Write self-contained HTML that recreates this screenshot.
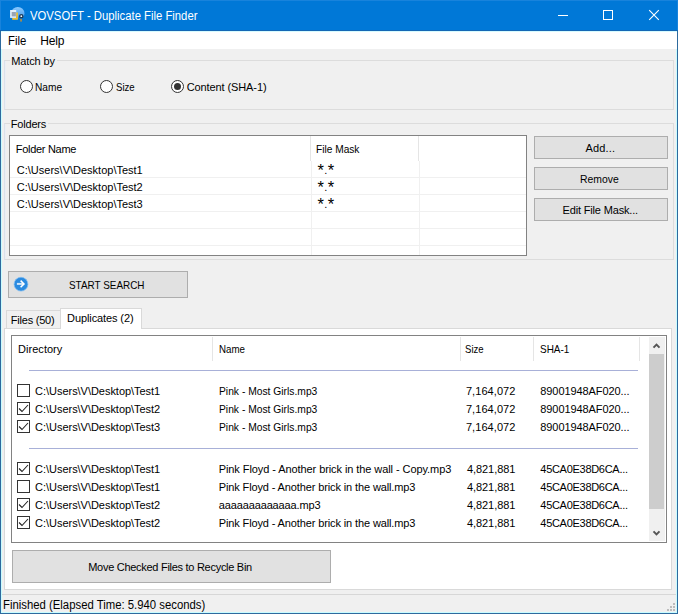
<!DOCTYPE html>
<html><head><meta charset="utf-8"><title>VOVSOFT - Duplicate File Finder</title>
<style>
*{box-sizing:border-box;margin:0;padding:0}
html,body{width:678px;height:614px;overflow:hidden;background:#f0f0f0}
body{position:relative;font-family:"Liberation Sans","DejaVu Sans",sans-serif;font-size:11px;color:#000;line-height:13px}
.a{position:absolute;white-space:nowrap}
.gb{border:1px solid #dcdcdc;border-left-color:#dce1ea;box-shadow:inset 1px 0 0 #eaeff5}
.gl{background:#f0f0f0}
.radio{width:13px;height:13px;border-radius:50%;border:1px solid #333;background:#fff}
.dot{width:7px;height:7px;border-radius:50%;background:#333;left:2px;top:2px}
.btn{border:1px solid #adadad;background:#e1e1e1}
.lv{background:#fff;border:1px solid #828282}
.hl{background:#f0f0f0;height:1px}
.vl{background:#f0f0f0;width:1px}
.hs{background:#e5e5e5;width:1px}
.cb{width:13px;height:13px;border:1px solid #333;background:#fff}
.sep{height:1px;background:#a8b0d8;left:29px;width:609px}
.ast{font-size:16.5px;line-height:0;position:relative;top:2px}
.g{width:2px;height:2px;background:#bcbcbc}
</style></head><body>
<!-- window frame -->
<div class="a" style="left:0;top:0;width:678px;height:614px;background:#2e6a9e"></div>
<div class="a" style="left:1px;top:0;width:676px;height:613px;background:#c8fcff"></div>
<div class="a" style="left:2px;top:0;width:674px;height:612px;background:#f0f0f0"></div>
<div class="a" style="left:0;top:0;width:678px;height:31px;background:#0078d7"></div>
<div class="a" style="left:0;top:0;width:678px;height:1px;background:#1883dc"></div>
<div class="a" style="left:0;top:0;width:1px;height:30px;background:#1883dc"></div>
<div class="a" style="left:677px;top:0;width:1px;height:30px;background:#1883dc"></div>
<!-- app icon -->
<svg class="a" style="left:8px;top:5px" width="18" height="18" viewBox="8 5 18 18">
<defs><linearGradient id="ig" x1="0" y1="0" x2="0" y2="1"><stop offset="0" stop-color="#8ccaff"/><stop offset="0.6" stop-color="#5aa8f0"/><stop offset="1" stop-color="#0078d7" stop-opacity="0"/></linearGradient></defs>
<circle cx="17.8" cy="13.6" r="6.7" fill="url(#ig)"/>
<rect x="10.1" y="10" width="6.1" height="7.9" fill="#e6f0fa"/>
<rect x="11.7" y="12" width="4.2" height="4.4" fill="#98a4b4"/>
<path d="M16.2 12.6H17.9V19.8H12.2V17.9H16.2Z" fill="#f0c030"/>
<circle cx="21.3" cy="16.2" r="1.6" fill="#f4f8fc" stroke="#1c3c5c" stroke-width="1.4"/>
<rect x="20.3" y="18.8" width="1.5" height="2.8" fill="#c89030"/>
</svg>
<!-- window controls -->
<svg class="a" style="left:540px;top:0" width="138" height="31" viewBox="0 0 138 31" fill="none" stroke="#fff" stroke-width="1">
<path d="M18 15.5H28"/>
<rect x="63.5" y="10.5" width="9" height="9"/>
<path d="M109.2 10.2L118.8 19.8M118.8 10.2L109.2 19.8" stroke-width="1.1"/>
</svg>
<div class="a" style="left:0;top:30px;width:678px;height:1px;background:#1467b4"></div>
<div class="a" style="left:1px;top:31px;width:676px;height:18px;background:#fff"></div>
<div class="a" style="left:1px;top:31px;width:676px;height:1px;background:#d6fbff"></div>

<!-- Match by -->
<div class="a gb" style="left:4px;top:60px;width:670px;height:50px"></div>
<div class="a gl" style="left:10px;top:55px;width:47px;height:13px"></div>
<div class="a radio" style="left:20px;top:80px"></div>
<div class="a radio" style="left:100px;top:80px"></div>
<div class="a radio" style="left:171px;top:80px"><div class="a dot"></div></div>

<!-- Folders -->
<div class="a gb" style="left:4px;top:123px;width:670px;height:137px"></div>
<div class="a gl" style="left:10px;top:118px;width:38px;height:13px"></div>
<div class="a lv" style="left:9px;top:135px;width:518px;height:121px"></div>
<div class="a hs" style="left:310px;top:136px;height:25px"></div>
<div class="a hs" style="left:418px;top:136px;height:25px"></div>
<div class="a vl" style="left:311px;top:161px;height:94px"></div>
<div class="a vl" style="left:419px;top:161px;height:94px"></div>
<div class="a hl" style="left:10px;top:177px;width:516px"></div>
<div class="a hl" style="left:10px;top:194px;width:516px"></div>
<div class="a hl" style="left:10px;top:211px;width:516px"></div>
<div class="a hl" style="left:10px;top:228px;width:516px"></div>
<div class="a hl" style="left:10px;top:245px;width:516px"></div>
<div class="a btn" style="left:534px;top:136px;width:134px;height:23px"></div>
<div class="a btn" style="left:534px;top:167px;width:134px;height:23px"></div>
<div class="a btn" style="left:534px;top:198px;width:134px;height:23px"></div>

<!-- start search -->
<div class="a btn" style="left:8px;top:271px;width:180px;height:27px"></div>
<svg class="a" style="left:13px;top:276px" width="17" height="17" viewBox="0 0 17 17">
<circle cx="8" cy="8.2" r="6.9" fill="#2b8be0" stroke="#7cbcf2" stroke-width="0.7"/>
<path d="M3.9 7.9H10.2" stroke="#cfe6fb" stroke-width="2" fill="none"/>
<path d="M7.6 4.6L11 7.9L7.6 11.3" stroke="#fff" stroke-width="1.5" fill="none"/>
</svg>

<!-- tabs -->
<div class="a" style="left:4px;top:328px;width:668px;height:262px;background:#fff;border:1px solid #d9d9d9"></div>
<div class="a" style="left:6px;top:310px;width:55px;height:18px;border:1px solid #d9d9d9;border-bottom:0;background:#f0f0f0"></div>
<div class="a" style="left:60px;top:308px;width:82px;height:21px;border:1px solid #d9d9d9;border-bottom:0;background:#fff"></div>

<!-- list 2 -->
<div class="a lv" style="left:11px;top:335px;width:656px;height:208px"></div>
<div class="a hs" style="left:212px;top:337px;height:24px"></div>
<div class="a hs" style="left:460px;top:337px;height:24px"></div>
<div class="a hs" style="left:533px;top:337px;height:24px"></div>
<div class="a hs" style="left:639px;top:337px;height:24px"></div>
<div class="a sep" style="top:370px"></div>
<div class="a sep" style="top:448px"></div>
<div class="a cb" style="left:17px;top:384px"></div>
<div class="a cb" style="left:17px;top:402px"><svg class="a" style="left:-1px;top:-1px" width="13" height="13" viewBox="0 0 13 13"><path d="M2 6.5L5 9.5L11 3" fill="none" stroke="#222" stroke-width="1.1"/></svg></div>
<div class="a cb" style="left:17px;top:420px"><svg class="a" style="left:-1px;top:-1px" width="13" height="13" viewBox="0 0 13 13"><path d="M2 6.5L5 9.5L11 3" fill="none" stroke="#222" stroke-width="1.1"/></svg></div>
<div class="a cb" style="left:17px;top:462px"><svg class="a" style="left:-1px;top:-1px" width="13" height="13" viewBox="0 0 13 13"><path d="M2 6.5L5 9.5L11 3" fill="none" stroke="#222" stroke-width="1.1"/></svg></div>
<div class="a cb" style="left:17px;top:480px"></div>
<div class="a cb" style="left:17px;top:498px"><svg class="a" style="left:-1px;top:-1px" width="13" height="13" viewBox="0 0 13 13"><path d="M2 6.5L5 9.5L11 3" fill="none" stroke="#222" stroke-width="1.1"/></svg></div>
<div class="a cb" style="left:17px;top:516px"><svg class="a" style="left:-1px;top:-1px" width="13" height="13" viewBox="0 0 13 13"><path d="M2 6.5L5 9.5L11 3" fill="none" stroke="#222" stroke-width="1.1"/></svg></div>

<!-- scrollbar -->
<div class="a" style="left:649px;top:337px;width:16px;height:204px;background:#f0f0f0"></div>
<div class="a" style="left:649px;top:354px;width:15px;height:155px;background:#cdcdcd"></div>
<svg class="a" style="left:649px;top:336px" width="17" height="206" viewBox="0 0 17 206" fill="none" stroke="#555" stroke-width="2">
<path d="M4.5 11.6L7.5 8.6L10.5 11.6"/>
<path d="M4.5 195.4L7.5 198.4L10.5 195.4"/>
</svg>

<div class="a btn" style="left:12px;top:550px;width:319px;height:33px"></div>

<!-- status -->
<div class="a" style="left:2px;top:594px;width:674px;height:1px;background:#d7d7d7"></div>
<div class="a g" style="left:673px;top:603px"></div>
<div class="a g" style="left:670px;top:606px"></div><div class="a g" style="left:673px;top:606px"></div>
<div class="a g" style="left:667px;top:609px"></div><div class="a g" style="left:670px;top:609px"></div><div class="a g" style="left:673px;top:609px"></div>

<div class="a" id="t_title" style="left:29.90px;top:9px;transform:scaleX(0.9416);transform-origin:0 0;font-size:12px;line-height:15px;color:#fff">VOVSOFT - Duplicate File Finder</div>
<div class="a" id="t_file" style="left:7.80px;top:34px;transform:scaleX(0.9460);transform-origin:0 0;font-size:12px;line-height:15px">File</div>
<div class="a" id="t_help" style="left:40.20px;top:34px;letter-spacing:-0.133px;font-size:12px;line-height:15px">Help</div>
<div class="a" id="t_match" style="left:11.30px;top:55px;letter-spacing:-0.143px">Match by</div>
<div class="a" id="t_name" style="left:35.10px;top:81px;transform:scaleX(0.9230);transform-origin:0 0">Name</div>
<div class="a" id="t_size" style="left:115.70px;top:81px;transform:scaleX(0.8751);transform-origin:0 0">Size</div>
<div class="a" id="t_content" style="left:186.70px;top:81px;letter-spacing:-0.100px">Content (SHA-1)</div>
<div class="a" id="t_folders" style="left:10.80px;top:118px;letter-spacing:-0.200px">Folders</div>
<div class="a" id="t_fname" style="left:15.80px;top:143px;letter-spacing:-0.300px">Folder Name</div>
<div class="a" id="t_fmask" style="left:315.80px;top:143px;transform:scaleX(0.9231);transform-origin:0 0">File Mask</div>
<div class="a" id="t_p1" style="left:16.80px;top:164px">C:\Users\V\Desktop\Test1</div>
<div class="a" id="t_p2" style="left:16.80px;top:181px">C:\Users\V\Desktop\Test2</div>
<div class="a" id="t_p3" style="left:16.80px;top:198px">C:\Users\V\Desktop\Test3</div>
<div class="a" id="t_m1" style="left:317.60px;top:164px;letter-spacing:0.300px"><span class="ast">*</span>.<span class="ast">*</span></div>
<div class="a" id="t_m2" style="left:317.60px;top:181px;letter-spacing:0.300px"><span class="ast">*</span>.<span class="ast">*</span></div>
<div class="a" id="t_m3" style="left:317.60px;top:198px;letter-spacing:0.300px"><span class="ast">*</span>.<span class="ast">*</span></div>
<div class="a" id="t_add" style="left:585.40px;top:142px;letter-spacing:0.160px">Add...</div>
<div class="a" id="t_remove" style="left:580.40px;top:173px;transform:scaleX(0.9458);transform-origin:0 0">Remove</div>
<div class="a" id="t_edit" style="left:562.50px;top:204px;letter-spacing:-0.162px">Edit File Mask...</div>
<div class="a" id="t_start" style="left:69.10px;top:279px;transform:scaleX(0.9014);transform-origin:0 0">START SEARCH</div>
<div class="a" id="t_files" style="left:10.80px;top:314px;letter-spacing:-0.223px">Files (50)</div>
<div class="a" id="t_dups" style="left:67.10px;top:312px;letter-spacing:-0.107px">Duplicates (2)</div>
<div class="a" id="t_dir" style="left:18.10px;top:343px;letter-spacing:0.025px">Directory</div>
<div class="a" id="t_hname" style="left:218.70px;top:343px;transform:scaleX(0.8856);transform-origin:0 0">Name</div>
<div class="a" id="t_hsize" style="left:465.10px;top:343px;transform:scaleX(0.8692);transform-origin:0 0">Size</div>
<div class="a" id="t_hsha" style="left:540.30px;top:343px;transform:scaleX(0.9077);transform-origin:0 0">SHA-1</div>
<div class="a" id="t_move" style="left:88.20px;top:561px;letter-spacing:-0.281px">Move Checked Files to Recycle Bin</div>
<div class="a" id="t_status" style="left:3.30px;top:598px;transform:scaleX(0.9447);transform-origin:0 0;font-size:12px;line-height:15px">Finished (Elapsed Time: 5.940 seconds)</div>
<div class="a" id="r0d" style="left:35.10px;top:385px;letter-spacing:-0.035px">C:\Users\V\Desktop\Test1</div>
<div class="a" id="r0n" style="left:218.70px;top:385px;transform:scaleX(0.9355);transform-origin:0 0">Pink - Most Girls.mp3</div>
<div class="a" id="r0s" style="left:465.90px;top:385px;letter-spacing:0.076px">7,164,072</div>
<div class="a" id="r0h" style="left:540.30px;top:385px;letter-spacing:-0.080px">89001948AF020...</div>
<div class="a" id="r1d" style="left:35.10px;top:403px;letter-spacing:-0.035px">C:\Users\V\Desktop\Test2</div>
<div class="a" id="r1n" style="left:218.70px;top:403px;transform:scaleX(0.9355);transform-origin:0 0">Pink - Most Girls.mp3</div>
<div class="a" id="r1s" style="left:465.90px;top:403px;letter-spacing:0.076px">7,164,072</div>
<div class="a" id="r1h" style="left:540.30px;top:403px;letter-spacing:-0.080px">89001948AF020...</div>
<div class="a" id="r2d" style="left:35.10px;top:421px;letter-spacing:-0.035px">C:\Users\V\Desktop\Test3</div>
<div class="a" id="r2n" style="left:218.70px;top:421px;transform:scaleX(0.9355);transform-origin:0 0">Pink - Most Girls.mp3</div>
<div class="a" id="r2s" style="left:465.90px;top:421px;letter-spacing:0.076px">7,164,072</div>
<div class="a" id="r2h" style="left:540.30px;top:421px;letter-spacing:-0.080px">89001948AF020...</div>
<div class="a" id="r3d" style="left:35.10px;top:463px;letter-spacing:-0.035px">C:\Users\V\Desktop\Test1</div>
<div class="a" id="r3n" style="left:218.70px;top:463px;letter-spacing:-0.079px">Pink Floyd - Another brick in the wall - Copy.mp3</div>
<div class="a" id="r3s" style="left:466.90px;top:463px;letter-spacing:-0.049px">4,821,881</div>
<div class="a" id="r3h" style="left:540.30px;top:463px;letter-spacing:-0.286px">45CA0E38D6CA...</div>
<div class="a" id="r4d" style="left:35.10px;top:481px;letter-spacing:-0.035px">C:\Users\V\Desktop\Test1</div>
<div class="a" id="r4n" style="left:218.70px;top:481px;letter-spacing:-0.122px">Pink Floyd - Another brick in the wall.mp3</div>
<div class="a" id="r4s" style="left:466.90px;top:481px;letter-spacing:-0.049px">4,821,881</div>
<div class="a" id="r4h" style="left:540.30px;top:481px;letter-spacing:-0.286px">45CA0E38D6CA...</div>
<div class="a" id="r5d" style="left:35.10px;top:499px;letter-spacing:-0.035px">C:\Users\V\Desktop\Test2</div>
<div class="a" id="r5n" style="left:218.70px;top:499px;letter-spacing:-0.125px">aaaaaaaaaaaaa.mp3</div>
<div class="a" id="r5s" style="left:466.90px;top:499px;letter-spacing:-0.049px">4,821,881</div>
<div class="a" id="r5h" style="left:540.30px;top:499px;letter-spacing:-0.286px">45CA0E38D6CA...</div>
<div class="a" id="r6d" style="left:35.10px;top:517px;letter-spacing:-0.035px">C:\Users\V\Desktop\Test2</div>
<div class="a" id="r6n" style="left:218.70px;top:517px;letter-spacing:-0.122px">Pink Floyd - Another brick in the wall.mp3</div>
<div class="a" id="r6s" style="left:466.90px;top:517px;letter-spacing:-0.049px">4,821,881</div>
<div class="a" id="r6h" style="left:540.30px;top:517px;letter-spacing:-0.286px">45CA0E38D6CA...</div>
</body></html>
